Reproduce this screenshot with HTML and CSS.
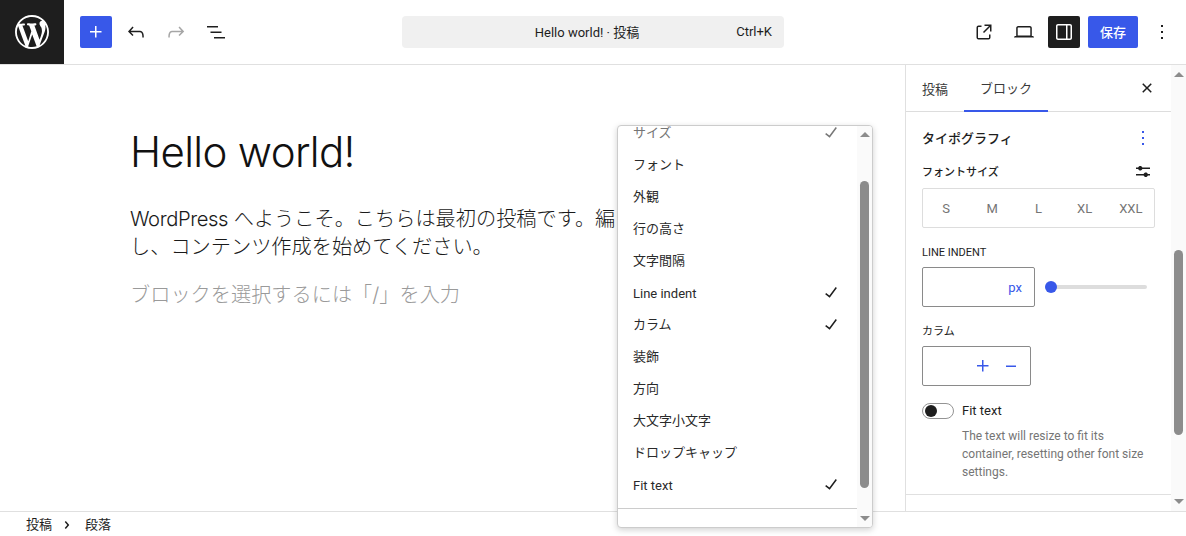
FILE: index.html
```html
<!DOCTYPE html>
<html lang="ja">
<head>
<meta charset="utf-8">
<title>Hello world! · 投稿</title>
<link rel="stylesheet" href="styles.css">
</head>
<body>
<div class="app">
  <header class="topbar">
    <div class="logo"><svg width="34" height="34" viewBox="0 0 20 20"><path fill="#fff" d="M20 10c0-5.51-4.49-10-10-10C4.48 0 0 4.49 0 10c0 5.52 4.48 10 10 10 5.51 0 10-4.48 10-10zM7.78 15.37L4.37 6.22c.55-.02 1.17-.08 1.17-.08.5-.06.44-1.13-.06-1.11 0 0-1.45.11-2.37.11-.18 0-.37 0-.58-.01C4.12 2.69 6.87 1.11 10 1.11c2.33 0 4.45.87 6.05 2.34-.68-.11-1.65.39-1.65 1.58 0 .74.45 1.36.9 2.1.35.61.55 1.36.55 2.46 0 1.49-1.4 5-1.4 5l-3.03-8.37c.54-.02.82-.17.82-.17.5-.05.44-1.25-.06-1.22 0 0-1.44.12-2.38.12-.87 0-2.33-.12-2.33-.12-.5-.03-.56 1.2-.06 1.22l.92.08 1.26 3.41zM17.41 10c.24-.64.74-1.87.43-4.25.7 1.29 1.05 2.71 1.05 4.25 0 3.29-1.73 6.24-4.4 7.78.97-2.59 1.94-5.2 2.92-7.78zM6.1 18.09C3.12 16.65 1.11 13.53 1.11 10c0-1.3.23-2.48.72-3.59C3.25 10.3 4.67 14.2 6.1 18.09zm4.03-6.63l2.58 6.98c-.86.29-1.76.45-2.71.45-.79 0-1.57-.11-2.29-.33.81-2.38 1.62-4.74 2.42-7.1z"/></svg></div>
    <div class="tools">
      <div class="btn primary"><svg width="24" height="24" viewBox="0 0 24 24"><path fill="#fff" d="M11 12.5V17.5H12.5V12.5H17.5V11H12.5V6H11V11H6V12.5H11Z"/></svg></div>
      <div class="btn wide"><svg width="24" height="24" viewBox="0 0 24 24"><path fill="#1e1e1e" d="M18.3 11.7c-.6-.6-1.4-.9-2.3-.9H6.7l2.9-3.3-1.1-1-4.5 5L8.5 16l1-1-2.7-2.7H16c.5 0 .9.2 1.3.5 1 1 1 3.4 1 4.5v.3h1.5v-.2c0-1.5 0-4.3-1.5-5.7z"/></svg></div>
      <div class="btn wide"><svg width="24" height="24" viewBox="0 0 24 24"><path fill="#a6a6a6" d="M15.6 6.5l-1.1 1 2.9 3.3H8c-.9 0-1.7.3-2.3.9-1.4 1.5-1.4 4.2-1.4 5.6v.2h1.5v-.3c0-1.1 0-3.5 1-4.5.3-.3.7-.5 1.3-.5h9.2L14.5 15l1.1 1.1 4.6-4.6-4.6-5z"/></svg></div>
      <div class="btn wide"><svg width="24" height="24" viewBox="0 0 24 24"><path fill="#1e1e1e" d="M3 6h11v1.5H3V6Zm3.5 5.5h11V13h-11v-1.5ZM21 17H10v1.5h11V17Z"/></svg></div>
    </div>
    <div class="command">
      <span class="command-title">Hello world! · 投稿</span>
      <span class="command-key">Ctrl+K</span>
    </div>
    <div class="actions">
      <div class="btn wide"><svg width="24" height="24" viewBox="0 0 24 24"><path fill="#1e1e1e" d="M19.5 4.5h-7V6h4.44l-5.97 5.97 1.06 1.06L18 7.06v4.44h1.5v-7Zm-13 1a2 2 0 0 0-2 2v10a2 2 0 0 0 2 2h10a2 2 0 0 0 2-2v-3H17v3a.5.5 0 0 1-.5.5h-10a.5.5 0 0 1-.5-.5v-10a.5.5 0 0 1 .5-.5h3V5.5h-3Z"/></svg></div>
      <div class="btn wide"><svg width="24" height="24" viewBox="0 0 24 24"><path fill="#1e1e1e" d="M20.5 16h-.7V8c0-1.1-.9-2-2-2H6.2c-1.1 0-2 .9-2 2v8h-.7c-.8 0-1.5.7-1.5 1.5h20c0-.8-.7-1.5-1.5-1.5zM5.7 8c0-.3.2-.5.5-.5h11.6c.3 0 .5.2.5.5v7.6H5.7V8z"/></svg></div>
      <div class="btn dark"><svg width="24" height="24" viewBox="0 0 24 24"><path fill="#fff" d="M18 4H6c-1.1 0-2 .9-2 2v12c0 1.1.9 2 2 2h12c1.1 0 2-.9 2-2V6c0-1.1-.9-2-2-2zm-4 14.5H6c-.3 0-.5-.2-.5-.5V6c0-.3.2-.5.5-.5h8v13zm4.5-.5c0 .3-.2.5-.5.5h-2.5v-13H18c.3 0 .5.2.5.5v12z"/></svg></div>
      <div class="save">保存</div>
      <div class="btn more"><svg width="24" height="24" viewBox="0 0 24 24"><path fill="#1e1e1e" d="M13 19h-2v-2h2v2zm0-6h-2v-2h2v2zm0-6h-2V5h2v2z"/></svg></div>
    </div>
  </header>

  <main class="main">
    <section class="editor">
      <h1 class="post-title">Hello world!</h1>
      <p class="post-text"><span class="latin">WordPress</span> へようこそ。こちらは最初の投稿です。編<br>し、コンテンツ作成を始めてください。</p>
      <p class="post-hint">ブロックを選択するには「/」を入力</p>
    </section>

    <aside class="sidebar">
      <div class="sidebar-col">
        <div class="tabs">
          <div class="tab">投稿</div>
          <div class="tab active">ブロック</div>
          <div class="tab-close"><svg width="24" height="24" viewBox="0 0 24 24"><path fill="#1e1e1e" d="M12 13.06l3.712 3.713 1.061-1.06L13.061 12l3.712-3.712-1.06-1.06L12 10.938 8.288 7.227l-1.061 1.06L10.939 12l-3.712 3.712 1.06 1.061L12 13.061z"/></svg></div>
        </div>
        <div class="panel">
          <div class="panel-head">
            <span class="panel-title">タイポグラフィ</span>
            <svg width="24" height="24" viewBox="0 0 24 24"><path fill="#3858e9" d="M13 19h-2v-2h2v2zm0-6h-2v-2h2v2zm0-6h-2V5h2v2z"/></svg>
          </div>
          <div class="size-head">
            <span class="field-label strong">フォントサイズ</span>
            <svg width="24" height="24" viewBox="0 0 24 24"><path fill="#1e1e1e" d="m19 7.5h-7.628c-.3089-.87389-1.1423-1.5-2.122-1.5-.97966 0-1.81309.62611-2.12197 1.5h-2.12803v1.5h2.12803c.30888.87389 1.14231 1.5 2.12197 1.5.97967 0 1.81308-.62611 2.12197-1.5h7.628z m0 6.5h-2.128c-.3089-.8739-1.1423-1.5-2.122-1.5s-1.8131.6261-2.122 1.5h-7.628v1.5h7.628c.3089.8739 1.1423 1.5 2.122 1.5s1.8131-.6261 2.122-1.5h2.128z"/></svg>
          </div>
          <div class="sizes">
            <span>S</span><span>M</span><span>L</span><span>XL</span><span>XXL</span>
          </div>
          <div class="field-label indent-label">LINE INDENT</div>
          <div class="indent-row">
            <div class="unit-input">px</div>
            <div class="range"><span class="range-thumb"></span></div>
          </div>
          <div class="field-label column-label">カラム</div>
          <div class="stepper">
            <svg width="24" height="24" viewBox="0 0 24 24"><path fill="#3858e9" d="M11 12.5V17.5H12.5V12.5H17.5V11H12.5V6H11V11H6V12.5H11Z"/></svg>
            <svg width="24" height="24" viewBox="0 0 24 24"><path fill="#3858e9" d="M7 11.5h10V13H7z"/></svg>
          </div>
          <div class="toggle-row">
            <span class="toggle"><span class="toggle-knob"></span></span>
            <span class="toggle-label">Fit text</span>
          </div>
          <p class="toggle-help">The text will resize to fit its container, resetting other font size settings.</p>
        </div>
        <div class="panel-next"></div>
      </div>
      <div class="scrollbar side-scroll">
        <span class="arrow up"></span>
        <span class="thumb"></span>
        <span class="arrow down"></span>
      </div>
    </aside>
  </main>

  <footer class="crumbs">
    <span>投稿</span>
    <svg width="24" height="24" viewBox="0 0 24 24"><path fill="#1e1e1e" d="M10.8622 8.04053L14.2805 12.0286L10.8622 16.0167L9.72327 15.0405L12.3049 12.0286L9.72327 9.01672L10.8622 8.04053Z"/></svg>
    <span>段落</span>
  </footer>

  <div class="popover">
    <div class="pop-col">
      <ul class="menu">
        <li class="cjk faded">サイズ<svg width="24" height="24" viewBox="0 0 24 24"><path fill="#1e1e1e" d="M16.7 7.1l-6.3 8.5-3.3-2.5-.9 1.2 4.5 3.4L17.9 8z"/></svg></li>
        <li class="cjk">フォント</li>
        <li class="cjk">外観</li>
        <li class="cjk">行の高さ</li>
        <li class="cjk">文字間隔</li>
        <li>Line indent<svg width="24" height="24" viewBox="0 0 24 24"><path fill="#1e1e1e" d="M16.7 7.1l-6.3 8.5-3.3-2.5-.9 1.2 4.5 3.4L17.9 8z"/></svg></li>
        <li class="cjk">カラム<svg width="24" height="24" viewBox="0 0 24 24"><path fill="#1e1e1e" d="M16.7 7.1l-6.3 8.5-3.3-2.5-.9 1.2 4.5 3.4L17.9 8z"/></svg></li>
        <li class="cjk">装飾</li>
        <li class="cjk">方向</li>
        <li class="cjk">大文字小文字</li>
        <li class="cjk">ドロップキャップ</li>
        <li>Fit text<svg width="24" height="24" viewBox="0 0 24 24"><path fill="#1e1e1e" d="M16.7 7.1l-6.3 8.5-3.3-2.5-.9 1.2 4.5 3.4L17.9 8z"/></svg></li>
      </ul>
      <div class="pop-foot"></div>
    </div>
    <div class="scrollbar pop-scroll">
      <span class="arrow up"></span>
      <span class="thumb"></span>
      <span class="arrow down"></span>
    </div>
  </div>
</div>
</body>
</html>
```

FILE: styles.css
```css
* { box-sizing: border-box; }
html, body { margin: 0; height: 100%; overflow: hidden; }
body {
  background: #fff;
  color: #1e1e1e;
  font-family: Roboto, "Noto Sans CJK JP", sans-serif;
  font-size: 13px;
}
svg { display: block; flex: none; }

.app { position: relative; width: 1186px; height: 536px; display: flex; flex-direction: column; overflow: hidden; }

/* top bar */
.topbar { height: 65px; flex: none; display: flex; align-items: center; border-bottom: 1px solid #e0e0e0; padding-bottom: 1px; }
.logo { width: 64px; height: 64px; margin-bottom: -1px; background: #1e1e1e; display: flex; align-items: center; justify-content: center; }
.tools { display: flex; align-items: center; margin-left: 16px; width: 322px; }
.btn { height: 32px; display: flex; align-items: center; justify-content: center; border-radius: 2px; flex: none; }
.btn.primary { width: 32px; background: #3858e9; margin-right: 4px; }
.btn.wide { width: 40px; }
.btn.dark { width: 32px; background: #1e1e1e; margin-left: 4px; margin-right: 8px; }
.btn.more { width: 24px; margin-left: 12px; }
.command { width: 382px; height: 32px; border-radius: 4px; background: #f0f0f0; display: flex; align-items: center; position: relative; font-size: 13px; }
.command-title { flex: 1; text-align: center; padding-right: 12px; }
.command-key { position: absolute; right: 12px; font-size: 13px; color: #1e1e1e; }
.actions { display: flex; align-items: center; margin-left: auto; padding-right: 12px; }
.save { width: 50px; height: 32px; background: #3858e9; color: #fff; border-radius: 2px; display: flex; align-items: center; justify-content: center; font-size: 13px; font-weight: 500; }

/* content */
.main { flex: 1; display: flex; min-height: 0; }
.editor { width: 905px; flex: none; padding: 58px 0 0 130px; font-family: Inter, "Noto Sans CJK JP", sans-serif; font-weight: 300; }
.post-title { margin: 0; font-size: 42px; line-height: 58px; font-weight: 300; letter-spacing: -0.65px; color: #111; white-space: nowrap; }
.post-text { margin: 24px 0 0; font-size: 20.2px; line-height: 28px; white-space: nowrap; color: #1a1a1a; }
.latin { letter-spacing: -0.4px; }
.post-hint { margin: 20px 0 0; font-size: 20.2px; line-height: 28px; color: #9a9a9a; white-space: nowrap; }

.sidebar { flex: 1; display: flex; border-left: 1px solid #e0e0e0; min-width: 0; }
.sidebar-col { flex: 1; min-width: 0; display: flex; flex-direction: column; overflow: hidden; }
.tabs { height: 47px; flex: none; display: flex; align-items: stretch; border-bottom: 1px solid #ddd; }
.tab { display: flex; align-items: center; justify-content: center; color: #3a3a3a; font-size: 13px; height: 47px; padding-bottom: 1px; }
.tab:first-child { width: 58px; }
.tab.active { width: 84px; border-bottom: 2px solid #3858e9; padding-top: 1px; }
.tab-close { margin-left: auto; width: 48px; display: flex; align-items: center; justify-content: center; }

.panel { flex: none; height: 383px; padding: 0 16px 0 16px; border-bottom: 1px solid #e0e0e0; }
.panel-head { display: flex; justify-content: space-between; align-items: center; height: 24px; margin-top: 14px; }
.panel-title { font-size: 13px; font-weight: 500; padding-bottom: 2px; }
.size-head { display: flex; justify-content: space-between; align-items: center; height: 24px; margin-top: 10px; }
.size-head .field-label { padding-top: 2px; }
.field-label { font-size: 11px; line-height: 16px; color: #1e1e1e; }
.field-label.strong { font-weight: 500; }
.sizes { height: 40px; margin-top: 4px; border: 1px solid #ddd; border-radius: 2px; display: grid; grid-template-columns: repeat(5, 46.2px); align-items: center; justify-items: center; color: #757575; font-size: 13px; }
.indent-label { margin-top: 17px; }
.indent-row { display: flex; align-items: center; margin-top: 6px; }
.unit-input { width: 113px; height: 40px; border: 1px solid #8a8a8a; border-radius: 2px; color: #3858e9; display: flex; align-items: center; justify-content: flex-end; padding-right: 12px; font-size: 13px; }
.range { width: 102px; height: 4px; margin-left: 10px; border-radius: 2px; background: #ddd; display: flex; align-items: center; }
.range-thumb { width: 12px; height: 12px; border-radius: 50%; background: #3858e9; }
.column-label { margin-top: 17px; }
.stepper { width: 109px; height: 40px; margin-top: 6px; border: 1px solid #8a8a8a; border-radius: 2px; display: flex; align-items: center; justify-content: flex-end; gap: 4px; padding-right: 7px; }
.toggle-row { display: flex; align-items: center; margin-top: 17px; }
.toggle { width: 32px; height: 16px; border: 1px solid #949494; border-radius: 8px; display: flex; align-items: center; padding-left: 2px; }
.toggle-knob { width: 12px; height: 12px; border-radius: 50%; background: #1e1e1e; }
.toggle-label { margin-left: 8px; font-size: 13px; line-height: 16px; }
.toggle-help { margin: 8px 0 0 40px; font-size: 12px; line-height: 18px; color: #757575; width: 190px; }

/* scrollbars */
.scrollbar { flex: none; display: flex; flex-direction: column; align-items: center; background: #fafafa; }
.side-scroll { width: 15px; padding-top: 7px; }
.side-scroll .thumb { height: 185px; margin-top: 173px; }
.side-scroll .arrow.down { margin-top: auto; margin-bottom: 7px; }
.thumb { width: 9px; background: #8c8c8c; border-radius: 5px; }
.arrow { width: 0; height: 0; border-left: 5px solid transparent; border-right: 5px solid transparent; }
.arrow.up { border-bottom: 5px solid #8c8c8c; }
.arrow.down { border-top: 5px solid #8c8c8c; }

/* footer */
.crumbs { height: 25px; flex: none; border-top: 1px solid #e0e0e0; display: flex; align-items: center; padding: 1px 0 0 26px; font-size: 13px; background: #fff; }
.crumbs svg { margin: 0 6px 0 3px; }
.crumbs span { line-height: 24px; }

/* popover */
.popover { position: absolute; left: 617px; top: 125px; width: 256px; height: 403px; display: flex; background: #fff; border: 1px solid #ccc; border-radius: 4px; box-shadow: 0 2px 6px rgba(0,0,0,.18); overflow: hidden; }
.pop-col { flex: 1; min-width: 0; display: flex; flex-direction: column; overflow: hidden; }
.menu { list-style: none; margin: -9px 0 0; padding: 0; flex: none; }
.menu li { height: 32px; display: flex; align-items: center; justify-content: space-between; padding: 0 14px 0 15px; font-size: 13px; color: #2a2a2a; }
.menu li svg { margin-top: -2px; }
.menu li.cjk { padding-bottom: 3px; }
.menu li.cjk svg { margin-top: 1px; }
.menu li.faded { color: #757575; }
.menu li.faded svg { opacity: .6; }
.pop-foot { margin-top: 7px; flex: none; height: 20px; border-top: 1px solid #ccc; }
.pop-scroll { width: 15px; padding-top: 6px; }
.pop-scroll .thumb { height: 307px; margin-top: 44px; }
.pop-scroll .arrow.down { margin-top: auto; margin-bottom: 6px; }
```
